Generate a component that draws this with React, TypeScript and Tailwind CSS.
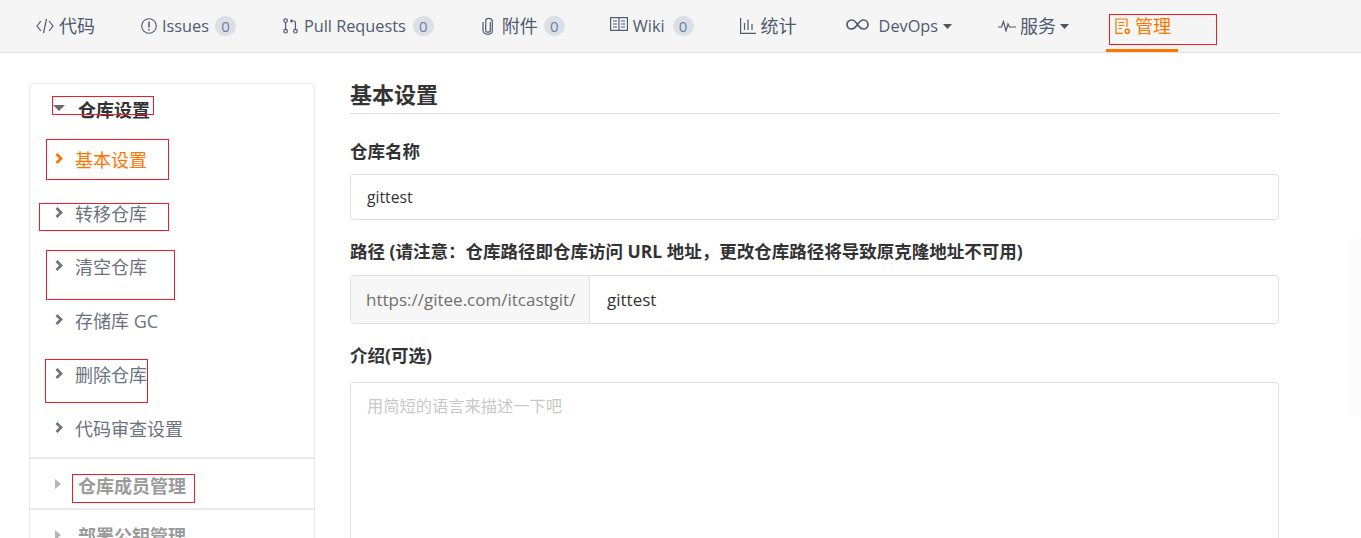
import React from 'react';

const SANS = 'font-["Open_Sans","Noto_Sans_CJK_SC",sans-serif]';

const Badge: React.FC<{ className?: string }> = ({ className }) => (
  <span className={`flex h-5 w-[21px] items-center justify-center rounded-full bg-[#dcdfe4] text-[15px] text-[#6a7fa8] ${className}`}>0</span>
);

const Caret: React.FC<{ className?: string }> = ({ className }) => (
  <svg width="9" height="5" viewBox="0 0 9 5" className={className}><path d="M0 0h9L4.500 5z" fill="#4a5568" /></svg>
);

const IconCode = () => (
  <svg width="18" height="16" viewBox="0 0 18 16" fill="none" stroke="#4f5b70" strokeWidth="1.2">
    <path d="M5 3 1 8l4 5M13 3l4 5-4 5M10.500 1 7.500 15" />
  </svg>
);
const IconIssue = () => (
  <svg width="16" height="16" viewBox="0 0 16 16" fill="none" stroke="#4f5b70" strokeWidth="1.1">
    <circle cx="8" cy="8" r="7.300" />
    <path d="M8 3.500v6M8 11v1.600" strokeWidth="1.500" />
  </svg>
);
const IconPull = () => (
  <svg width="15" height="16" viewBox="0 0 15 16" fill="none" stroke="#4f5b70" strokeWidth="1.2">
    <circle cx="2.600" cy="2.600" r="1.800" />
    <circle cx="2.600" cy="13.200" r="1.800" />
    <circle cx="12.400" cy="13.200" r="1.800" />
    <path d="M2.600 4.400v7M12.400 11.400V4.500q0-1.500-1.500-1.500H8.500" />
    <path d="M9.200 .8v4.400L6.800 3z" fill="#4f5b70" stroke="none" />
  </svg>
);
const IconClip = () => (
  <svg width="12" height="18" viewBox="0 0 12 18" fill="none" stroke="#4f5b70" strokeWidth="1.2">
    <path d="M8.300 5v8.500q0 1.700-2.300 1.700t-2.300-1.700V4q0-2.700 3-2.700t3.600 2.700v9.500q0 3.800-4.300 3.800T1 13.500V5" />
  </svg>
);
const IconBook = () => (
  <svg width="18" height="14" viewBox="0 0 18 14" fill="none" stroke="#4f5b70" strokeWidth="1.2" className="-mt-1">
    <rect x=".6" y=".6" width="16.800" height="12.800" />
    <path d="M9 .6v12.800M3 4h4M3 7h4M3 10h4M11 4h4M11 7h4M11 10h4" />
  </svg>
);
const IconStats = () => (
  <svg width="16" height="16" viewBox="0 0 16 16" fill="none" stroke="#4f5b70" strokeWidth="1.2">
    <path d="M.6 0v15.400H16M4.500 12V5M8 12V1.500M12 12V6" />
  </svg>
);
const IconInfinity = () => (
  <svg width="23" height="11" viewBox="0 0 23 11" fill="none" stroke="#4f5b70" strokeWidth="1.700" className="-mt-1">
    <path d="M11.500 5.500C9.500 2.500 8 1 5.500 1a4.500 4.500 0 0 0 0 9c2.500 0 4-1.500 6-4.500s3.500-4.500 6-4.500a4.500 4.500 0 0 1 0 9c-2.500 0-4-1.500-6-4.500z" />
  </svg>
);
const IconPulse = () => (
  <svg width="18" height="12" viewBox="0 0 18 12" fill="none" stroke="#4f5b70" strokeWidth="1.200">
    <path d="M0 7h3.500L5.500 1.500 8 11l2-7 1.500 3H18" />
  </svg>
);
const IconManage = () => (
  <svg width="16" height="17" viewBox="0 0 16 17" fill="none" stroke="#ff7500" strokeWidth="1.200">
    <path d="M8 15.400H1V1h11v8M3.500 4.500h6M3.500 7.500h6M3.500 10.500h3.500" />
    <circle cx="12.300" cy="13.300" r="2" strokeWidth="1.600" />
  </svg>
);

const Chevron: React.FC<{ active?: boolean }> = ({ active }) => (
  <svg width="8" height="11" viewBox="0 0 8 11" fill="none" stroke={active ? '#ff7500' : '#70757f'} strokeWidth="2.800" className="-mt-1">
    <path d="M1.500 1 6 5.500 1.500 10" />
  </svg>
);

const SideItem: React.FC<{ label: string; active?: boolean }> = ({ label, active }) => (
  <div className={`flex h-[53.800px] items-center gap-3 pl-[25px] text-[18px] ${active ? 'text-[#ff7500]' : 'text-[#6b7280]'}`}>
    <Chevron active={active} />
    <span>{label}</span>
  </div>
);

const SideGroup: React.FC<{ label: string; last?: boolean }> = ({ label, last }) => (
  <div className={`flex items-center gap-[17px] pl-[25px] text-[18px] font-bold text-[#9b9b9b] ${last ? 'h-[52px] pt-[2px]' : 'h-[51px] border-b-2 border-[#e8eaed] pt-[6px]'}`}>
    <svg width="6" height="10" viewBox="0 0 6 10" className="-mt-1"><path d="M0 0l6 5-6 5z" fill="#b5b5b5" /></svg>
    <span>{label}</span>
  </div>
);

// red boxes someone drew over the screenshot
const Marks: React.FC = () => (
  <>
    <div className="absolute left-[52px] top-[96px] h-[19px] w-[102px] border border-[#ee1c25]" />
    <div className="absolute left-[46px] top-[139px] h-[41px] w-[123px] border border-[#ee1c25]" />
    <div className="absolute left-[39px] top-[203px] h-[28px] w-[130px] border border-[#ee1c25]" />
    <div className="absolute left-[46px] top-[250px] h-[50px] w-[129px] border border-[#ee1c25]" />
    <div className="absolute left-[45px] top-[359px] h-[44px] w-[103px] border border-[#ee1c25]" />
    <div className="absolute left-[72px] top-[474px] h-[29px] w-[123px] border border-[#ee1c25]" />
    <div className="absolute left-[1109px] top-[14px] h-[31px] w-[108px] border border-[#ee1c25]" />
  </>
);

export default function App() {
  return (
    <div className={`relative h-[538px] w-[1361px] overflow-hidden bg-white ${SANS}`}>
      <nav className="flex h-[53px] items-center border-b border-[#e1e1e1] bg-[#f5f5f5] text-[16.300px] text-[#4f5b70]">
        <div className="ml-[36px] flex items-center gap-[5px]"><IconCode /><span className="text-[18px]">代码</span></div>
        <div className="ml-[46px] flex items-center gap-[5px]"><IconIssue /><span>Issues</span><Badge className="ml-[1px]" /></div>
        <div className="ml-[47px] flex items-center gap-[6px]"><IconPull /><span>Pull Requests</span><Badge className="ml-[1px]" /></div>
        <div className="ml-[48px] flex items-center gap-[8px]"><IconClip /><span className="text-[18px]">附件</span><Badge className="-ml-[2px]" /></div>
        <div className="ml-[45px] flex items-center gap-[5px]"><IconBook /><span>Wiki</span><Badge className="ml-[3px]" /></div>
        <div className="ml-[46px] flex items-center gap-[5px]"><IconStats /><span className="text-[18px]">统计</span></div>
        <div className="ml-[49px] flex items-center"><IconInfinity /><span className="ml-[10px]">DevOps</span><Caret className="ml-[5px]" /></div>
        <div className="ml-[46px] flex items-center gap-[4px]"><IconPulse /><span className="text-[18px]">服务</span><Caret /></div>
        <div className="ml-[46px] flex items-center gap-[4px] text-[#ff7500]"><IconManage /><span className="text-[18px]">管理</span></div>
      </nav>
      <div className="absolute left-[1106px] top-[49px] h-[3px] w-[72px] bg-[#ff7500]" />

      <div className="flex pl-[29px] pt-[30px]">
        <aside className="h-[500px] w-[286px] shrink-0 rounded border border-[#e3e9ed]">
          <div className="flex h-[49.500px] items-center gap-[13px] pl-[23px] pt-[3px] text-[18px] font-bold text-[#333333]">
            <svg width="12" height="6" viewBox="0 0 12 6" className="-mt-1"><path d="M0 0h12L6 6z" fill="#6b6b6b" /></svg>
            <span>仓库设置</span>
          </div>
          <SideItem label="基本设置" active />
          <SideItem label="转移仓库" />
          <SideItem label="清空仓库" />
          <SideItem label="存储库 GC" />
          <SideItem label="删除仓库" />
          <SideItem label="代码审查设置" />
          <div className="h-[2.500px] border-b-2 border-[#e8eaed]" />
          <SideGroup label="仓库成员管理" />
          <SideGroup label="部署公钥管理" last />
        </aside>

        <main className="ml-[35px] mt-[1px] w-[929px] shrink-0 text-[#333333]">
          <h2 className="h-[30px] border-b border-[#dfdfe6] text-[22px] font-bold leading-[20px]">基本设置</h2>
          <label className="mt-[25px] block text-[17.500px] font-bold leading-[24px]">仓库名称</label>
          <div className="mt-[11px] flex h-[46px] items-center rounded border border-[#dfdfe8] px-[16px] pt-[2px] text-[15.700px] text-[#333333]">gittest</div>
          <label className="mt-[19px] block text-[17.500px] font-bold leading-[24px]">路径 (请注意：仓库路径即仓库访问 URL 地址，更改仓库路径将导致原克隆地址不可用)</label>
          <div className="mt-[12px] flex h-[49px] rounded border border-[#dfdfe8] text-[17px]">
            <div className="flex w-[239px] items-center border-r border-[#dfdfe8] bg-[#f7f7f7] pl-[15px] text-[#6f6f6f]">https://gitee.com/itcastgit/</div>
            <div className="flex items-center pl-[17px]">gittest</div>
          </div>
          <label className="mt-[19px] block text-[17.500px] font-bold leading-[24px]">介绍(可选)</label>
          <div className="mt-[15px] h-[300px] rounded border border-[#dfdfe8] px-[16px] pt-[11px] text-[16.250px] text-[#c8c8c8]">用简短的语言来描述一下吧</div>
        </main>
      </div>
      <div className="absolute right-0 top-[237px] h-[180px] w-[16px] bg-gradient-to-l from-[#fbfbfb] to-white" />
      <Marks />
    </div>
  );
}
